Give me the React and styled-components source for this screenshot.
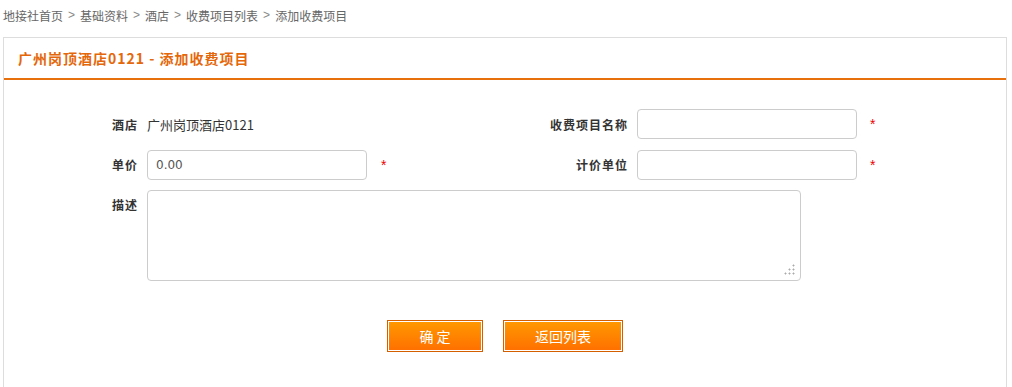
import React from 'react';
import styled, { createGlobalStyle } from 'styled-components';

const Global = createGlobalStyle`
    html, body {
        margin:0;
        padding:0;
        background:#fff;
    }
    body {
        font-family:"Noto Sans CJK SC", "Liberation Sans", sans-serif;
        font-size:12px;
        color:#333;
    }
`;

const Page = styled.div`
    padding:0 5px 0 3px;
`;

const Crumbs = styled.div`
    display:flex;
    align-items:center;
    height:30px;
    font-size:12px;
    color:#666;
`;

const Sep = styled.span`
    padding:0 5px;
    color:#888;
    font-family:"Liberation Sans", sans-serif;
`;

const Panel = styled.div`
    margin-top:7px;
    border:1px solid #ddd;
    border-bottom:none;
    height:360px;
`;

const PanelHead = styled.div`
    display:flex;
    align-items:center;
    height:40px;
    padding-left:14px;
    border-bottom:2px solid #e8700c;
    font-size:14px;
    font-weight:bold;
    letter-spacing:1px;
    color:#e4680b;
`;

const Form = styled.div`
    display:grid;
    grid-template-columns:143px 220px 147px 123px 220px 40px;
    grid-template-rows:30px 31px 91px;
    row-gap:10px;
    padding-top:29px;
    align-items:center;
`;

const Label = styled.div`
    justify-self:end;
    padding-right:9px;
    font-weight:bold;
    font-size:12px;
    letter-spacing:1px;
    color:#333;
    align-self:${p => (p.$top ? 'start' : 'center')};
    padding-top:${p => (p.$top ? '6px' : '0')};
`;

const Value = styled.div`
    font-size:13px;
    color:#333;
`;

const Input = styled.input`
    box-sizing:border-box;
    align-self:end;
    width:220px;
    height:30px;
    padding:0 8px;
    border:1px solid #ccc;
    border-radius:4px;
    font-family:"DejaVu Sans", sans-serif;
    font-size:12px;
    color:#555;
    outline:none;
`;

const AreaWrap = styled.div`
    position:relative;
    grid-column:2 / span 4;
    justify-self:start;
    align-self:stretch;
    width:654px;

    &::after{
        content:"";
        position:absolute;
        right:6px;
        bottom:6px;
        width:11px;
        height:11px;
        pointer-events:none;
        background:
            radial-gradient(circle, #aaa 0.9px, transparent 1.1px) 8px 0 / 3px 3px no-repeat,
            radial-gradient(circle, #aaa 0.9px, transparent 1.1px) 4px 4px / 3px 3px no-repeat,
            radial-gradient(circle, #aaa 0.9px, transparent 1.1px) 8px 4px / 3px 3px no-repeat,
            radial-gradient(circle, #aaa 0.9px, transparent 1.1px) 0 8px / 3px 3px no-repeat,
            radial-gradient(circle, #aaa 0.9px, transparent 1.1px) 4px 8px / 3px 3px no-repeat,
            radial-gradient(circle, #aaa 0.9px, transparent 1.1px) 8px 8px / 3px 3px no-repeat;
    }
`;

const Area = styled.textarea`
    display:block;
    box-sizing:border-box;
    width:100%;
    height:91px;
    border:1px solid #ccc;
    border-radius:4px;
    outline:none;
    resize:none;
`;

const Star = styled.span`
    padding-left:${p => p.$pad}px;
    color:#e00;
    font-size:14px;
    font-family:"Liberation Sans", sans-serif;
`;

const Buttons = styled.div`
    display:flex;
    justify-content:center;
    gap:20px;
    margin-top:39px;
`;

const Button = styled.button`
    box-sizing:border-box;
    width:${p => p.$w}px;
    height:32px;
    border:1px solid #d45f00;
    box-shadow:inset 0 0 0 1px #fff;
    background:linear-gradient(#ff9900, #ff6f00);
    color:#fff;
    font-family:"Noto Sans CJK SC", sans-serif;
    font-size:14px;
    cursor:pointer;
`;

const crumbs = ['地接社首页', '基础资料', '酒店', '收费项目列表', '添加收费项目'];

export default function App() {
    return (
        <Page>
            <Global />
            <Crumbs>
                {crumbs.map((c, i) => (
                    <React.Fragment key={c}>
                        {i > 0 && <Sep>&gt;</Sep>}
                        <span>{c}</span>
                    </React.Fragment>
                ))}
            </Crumbs>
            <Panel>
                <PanelHead>广州岗顶酒店0121 - 添加收费项目</PanelHead>
                <Form>
                    <Label>酒店</Label>
                    <Value>广州岗顶酒店0121</Value>
                    <div />
                    <Label>收费项目名称</Label>
                    <Input />
                    <Star $pad={13}>*</Star>

                    <Label>单价</Label>
                    <Input defaultValue="0.00" />
                    <Star $pad={14}>*</Star>
                    <Label>计价单位</Label>
                    <Input />
                    <Star $pad={13}>*</Star>

                    <Label $top>描述</Label>
                    <AreaWrap>
                        <Area />
                    </AreaWrap>
                </Form>
                <Buttons>
                    <Button $w={96}>确 定</Button>
                    <Button $w={120}>返回列表</Button>
                </Buttons>
            </Panel>
        </Page>
    );
}
